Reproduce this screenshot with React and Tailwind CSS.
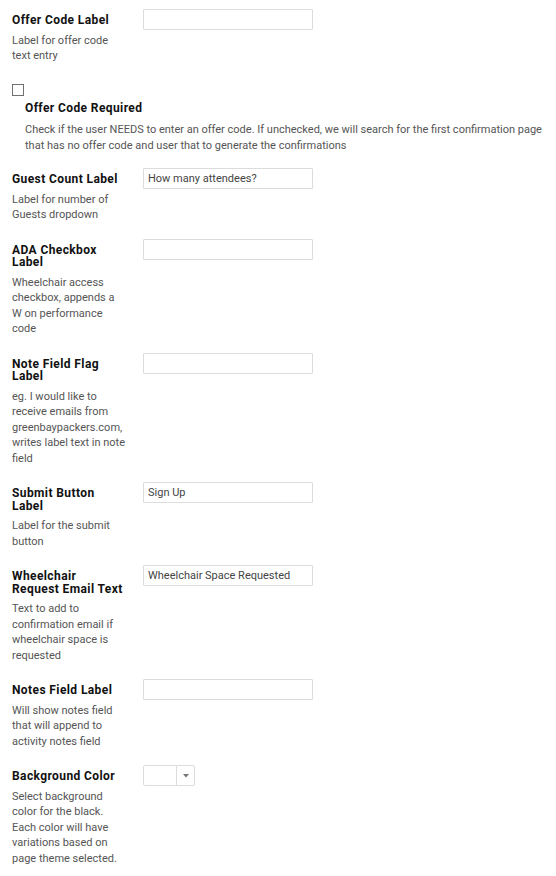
const fields = [
  { label: 'Offer Code Label', desc: 'Label for offer code text entry', value: '' },
];

const rest = [
  { label: 'Guest Count Label', desc: 'Label for number of Guests dropdown', value: 'How many attendees?' },
  { label: 'ADA Checkbox Label', desc: 'Wheelchair access checkbox, appends a W on performance code', value: '' },
  { label: 'Note Field Flag Label', desc: 'eg. I would like to receive emails from greenbaypackers.com, writes label text in note field', value: '' },
  { label: 'Submit Button Label', desc: 'Label for the submit button', value: 'Sign Up' },
  { label: 'Wheelchair Request Email Text', desc: 'Text to add to confirmation email if wheelchair space is requested', value: 'Wheelchair Space Requested' },
  { label: 'Notes Field Label', desc: 'Will show notes field that will append to activity notes field', value: '' },
];

function Row({ label, desc, value }) {
  return (
    <div className="flex items-start gap-[17px] mb-4">
      <div className="w-[114px] pt-[5px]">
        <div className="text-[12px] leading-[12.5px] font-bold tracking-[0.4px] text-[#111]">{label}</div>
        <p className="mt-[6px] text-[11px] leading-[15.5px] text-[#555]">{desc}</p>
      </div>
      <input
        readOnly
        value={value}
        className="w-[170px] h-[21px] border border-[#dcdcdc] rounded-[1px] px-[4px] text-[11px] text-[#444] bg-white outline-none"
      />
    </div>
  );
}

export default function App() {
  return (
    <div className="w-[556px] min-h-[876px] bg-white pl-3 pt-[9px]" style={{ fontFamily: 'Roboto, "Liberation Sans", sans-serif' }}>
      {fields.map(f => <Row key={f.label} {...f} />)}

      <div className="mt-[20px] mb-[15px]">
        <div className="w-3 h-3 border border-[#707070] bg-white" />
        <div className="pl-[13px] pt-[6px]">
          <div className="text-[12px] leading-[12.5px] font-bold tracking-[0.4px] text-[#111]">Offer Code Required</div>
          <p className="mt-[8px] text-[11px] leading-[15.5px] text-[#555]">
            Check if the user NEEDS to enter an offer code. If unchecked, we will search for the first confirmation page that has no offer code and user that to generate the confirmations
          </p>
        </div>
      </div>

      {rest.map(f => <Row key={f.label} {...f} />)}

      <div className="flex items-start gap-[17px]">
        <div className="w-[114px] pt-[5px]">
          <div className="text-[12px] leading-[12.5px] font-bold tracking-[0.4px] text-[#111]">Background Color</div>
          <p className="mt-[6px] text-[11px] leading-[15.5px] text-[#555]">
            Select background color for the black. Each color will have variations based on page theme selected.
          </p>
        </div>
        <div className="flex w-[52px] h-[21px] border border-[#dcdcdc] rounded-[2px] bg-white">
          <div className="w-[33px] border-r border-[#dcdcdc]" />
          <div className="flex-1 flex items-center justify-center">
            <svg width="6" height="4" viewBox="0 0 6 4"><path d="M0 0h6L3 3.5z" fill="#777" /></svg>
          </div>
        </div>
      </div>
    </div>
  );
}
